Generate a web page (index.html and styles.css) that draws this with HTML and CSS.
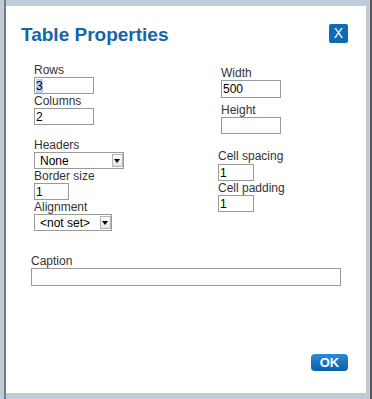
FILE: index.html
```html
<!DOCTYPE html>
<html lang="en">
<head>
    <meta charset="UTF-8">
    <title>Table Properties</title>
    <link rel="stylesheet" href="styles.css">
</head>
<body>
<div class="frame">
    <div class="shell">
        <div class="dialog">
            <div class="dlg-head">
                <h1 class="dlg-title">Table Properties</h1>
                <button class="btn-close">X</button>
            </div>

            <div class="columns">
                <div class="col-left">
                    <label class="lbl" for="rows">Rows</label>
                    <input class="txt w60" id="rows" type="text" value="3">
                    <label class="lbl" for="cols">Columns</label>
                    <input class="txt w60" id="cols" type="text" value="2">

                    <label class="lbl gap13" for="headers">Headers</label>
                    <div class="sel-box w90">
                        <select class="sel" id="headers">
                            <option>None</option>
                            <option>First row</option>
                            <option>First column</option>
                            <option>Both</option>
                        </select>
                        <span class="sel-arrow"></span>
                    </div>
                    <label class="lbl" for="border">Border size</label>
                    <input class="txt w35" id="border" type="text" value="1">
                    <label class="lbl" for="align">Alignment</label>
                    <div class="sel-box w78">
                        <select class="sel" id="align">
                            <option>&lt;not set&gt;</option>
                            <option>Left</option>
                            <option>Center</option>
                            <option>Right</option>
                        </select>
                        <span class="sel-arrow"></span>
                    </div>
                </div>

                <div class="col-right">
                    <div class="size-group">
                        <label class="lbl" for="width">Width</label>
                        <input class="txt w60 h18" id="width" type="text" value="500">
                        <label class="lbl gap5" for="height">Height</label>
                        <input class="txt w60" id="height" type="text" value="">
                    </div>
                    <label class="lbl gap15" for="spacing">Cell spacing</label>
                    <input class="txt w36 mt1" id="spacing" type="text" value="1">
                    <label class="lbl" for="padding">Cell padding</label>
                    <input class="txt w36" id="padding" type="text" value="1">
                </div>
            </div>

            <div class="caption-row">
                <label class="lbl" for="caption">Caption</label>
                <input class="txt w310 h18" id="caption" type="text" value="">
            </div>

            <div class="dlg-foot">
                <button class="btn-ok">OK</button>
            </div>
        </div>
    </div>
</div>
<script>
    // rows field starts with its value selected
    var rows = document.getElementById('rows');
    rows.focus();
    rows.select();
</script>
</body>
</html>
```

FILE: styles.css
```css
*{
    margin: 0;
    padding: 0;
}
body{
    font-family: "Liberation Sans", Arial, sans-serif;
    font-size: 12px;
    color: #333;
}
.frame{
    width: 372px;
    height: 399px;
    box-sizing: border-box;
    padding-left: 4px;
    background: #bdccd6;
    border-right: 2px solid #5a5a5a;
    display: flex;
}
.shell{
    flex: 1;
    display: flex;
    border-left: 2px solid #7a7a7a;
    padding: 6px 4px 6px 0;
}
.dialog{
    flex: 1;
    background: #fff;
    display: flex;
    flex-direction: column;
}
/*标题栏*/
.dlg-head{
    display: flex;
    justify-content: space-between;
    align-items: flex-start;
    padding: 17px 18px 0 15px;
}
.dlg-title{
    font-size: 19px;
    line-height: 23px;
    font-weight: bold;
    color: #1466aa;
}
.btn-close{
    width: 19px;
    height: 19px;
    margin-top: 1px;
    border: 0;
    border-radius: 2px;
    background: #0c6bb2;
    color: #fff;
    font-family: "Liberation Sans", Arial, sans-serif;
    font-size: 14px;
    line-height: 19px;
    text-align: center;
    cursor: pointer;
}
/*表单两栏*/
.columns{
    display: flex;
    margin-top: 17px;
    padding-left: 28px;
}
.col-left{
    width: 184px;
    display: flex;
    flex-direction: column;
    align-items: flex-start;
}
.col-right{
    padding-top: 3px;
    display: flex;
    flex-direction: column;
    align-items: flex-start;
}
.size-group{
    padding-left: 3px;
    display: flex;
    flex-direction: column;
    align-items: flex-start;
}
.lbl{
    display: block;
    line-height: 14px;
    color: #333;
}
.gap5{ margin-top: 5px; }
.gap13{ margin-top: 13px; }
.gap15{ margin-top: 15px; }
.mt1{ margin-top: 1px; }
.txt{
    display: block;
    box-sizing: border-box;
    height: 17px;
    border: 1px solid #9a9a9a;
    padding: 0 1px;
    font-family: "Liberation Sans", Arial, sans-serif;
    font-size: 12px;
    color: #000;
    background: #fff;
}
.txt:focus{
    outline: none;
}
.txt::selection{
    background: #b5d3f7;
    color: #000;
}
.w35{ width: 35px; }
.w36{ width: 36px; }
.w60{ width: 60px; }
.w310{ width: 310px; }
.h18{ height: 18px; }
/*下拉框*/
.sel-box{
    position: relative;
    height: 17px;
}
.w90{ width: 90px; }
.w78{ width: 78px; }
.sel{
    -webkit-appearance: none;
    appearance: none;
    width: 100%;
    height: 17px;
    box-sizing: border-box;
    border: 1px solid #9a9a9a;
    border-radius: 0;
    padding: 0 0 0 5px;
    background: #fff;
    font-family: "Liberation Sans", Arial, sans-serif;
    font-size: 12px;
    color: #000;
    outline: none;
}
.sel-arrow{
    position: absolute;
    right: 1px;
    top: 2px;
    width: 11px;
    height: 13px;
    box-sizing: border-box;
    border: 1px solid #b4b4b4;
    background: linear-gradient(#ffffff, #e4e4e4);
    pointer-events: none;
}
.sel-arrow:after{
    content: "";
    position: absolute;
    left: 1px;
    top: 4px;
    border-top: 4px solid #000;
    border-left: 3px solid transparent;
    border-right: 3px solid transparent;
}
/*标题输入*/
.caption-row{
    margin-top: 23px;
    padding-left: 25px;
}
/*底部按钮*/
.dlg-foot{
    display: flex;
    justify-content: flex-end;
    margin-top: 68px;
    padding-right: 18px;
}
.btn-ok{
    width: 37px;
    height: 17px;
    border: 0;
    border-radius: 4px;
    background: linear-gradient(#2b8bd8, #0a5fa9);
    color: #fff;
    font-family: "Liberation Sans", Arial, sans-serif;
    font-size: 13px;
    font-weight: bold;
    line-height: 17px;
    cursor: pointer;
}
```
